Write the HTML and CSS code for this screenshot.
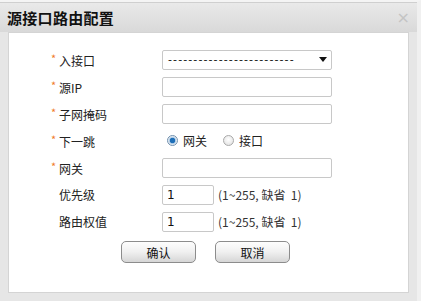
FILE: index.html
```html
<!DOCTYPE html>
<html lang="zh-CN">
<head>
  <meta charset="UTF-8">
  <title>源接口路由配置</title>
  <link rel="stylesheet" href="styles.css">
</head>
<body>

  <div class="dialog">
    <div class="dialog-header">
      <span class="dialog-title">源接口路由配置</span>
      <span class="dialog-close">&times;</span>
    </div>

    <div class="dialog-body">
      <div class="form-row">
        <label class="form-label"><span class="req">*</span>入接口</label>
        <div class="fake-select">
          <span>-------------------------</span>
          <span class="arrow"></span>
        </div>
      </div>

      <div class="form-row">
        <label class="form-label"><span class="req">*</span>源IP</label>
        <input type="text" class="text-input">
      </div>

      <div class="form-row">
        <label class="form-label"><span class="req">*</span>子网掩码</label>
        <input type="text" class="text-input">
      </div>

      <div class="form-row">
        <label class="form-label"><span class="req">*</span>下一跳</label>
        <div class="radio-group">
          <span class="radio checked"></span><span class="radio-text">网关</span>
          <span class="radio"></span><span class="radio-text">接口</span>
        </div>
      </div>

      <div class="form-row">
        <label class="form-label"><span class="req">*</span>网关</label>
        <input type="text" class="text-input">
      </div>

      <div class="form-row">
        <label class="form-label plain">优先级</label>
        <input type="text" class="text-input short" value="1">
        <span class="hint">(1~255, 缺省&nbsp;&nbsp;1)</span>
      </div>

      <div class="form-row">
        <label class="form-label plain">路由权值</label>
        <input type="text" class="text-input short" value="1">
        <span class="hint">(1~255, 缺省&nbsp;&nbsp;1)</span>
      </div>

      <div class="button-row">
        <button class="btn">确认</button>
        <button class="btn">取消</button>
      </div>
    </div>
  </div>

</body>
</html>
```

FILE: styles.css
```css
body {
  margin: 0;
  font-family: "Noto Sans CJK SC", "DejaVu Sans", sans-serif;
  font-size: 12px;
  color: #333;
  background: #fff;
}

.dialog {
  width: 421px;
  height: 301px;
  box-sizing: border-box;
  background: #e6e6e6;
  border-top: 2px solid #f4f4f4;
  border-right: 4px solid #f0f0f0;
}

.dialog-header {
  height: 30px;
  display: flex;
  align-items: center;
  justify-content: space-between;
  padding: 0 7px 0 7px;
  background: linear-gradient(#e9e9e9, #d9d9d9);
  border-top: 1px solid #cfcfcf;
  box-sizing: border-box;
}

.dialog-title {
  font-size: 15px;
  font-weight: bold;
  color: #111;
  letter-spacing: 0.3px;
}

.dialog-close {
  font-size: 16px;
  color: #c4c4c4;
  font-family: "DejaVu Sans", sans-serif;
}

.dialog-body {
  margin: 0 8px 0 8px;
  height: 261px;
  box-sizing: border-box;
  background: #fff;
  border: 1px solid #d4d4d4;
  padding: 13px 0 0 42px;
}

.form-row {
  display: flex;
  align-items: center;
  height: 27px;
}

.form-label {
  width: 111px;
  flex-shrink: 0;
  font-size: 12px;
  color: #222;
}

.form-label.plain {
  padding-left: 8px;
  width: 103px;
}

.req {
  color: #f07a2a;
  display: inline-block;
  width: 8px;
  vertical-align: 3px;
  font-size: 11px;
}

.text-input {
  width: 170px;
  height: 20px;
  box-sizing: border-box;
  border: 1px solid #c8c8c8;
  border-radius: 2px;
  padding: 0 4px;
  font-family: "DejaVu Sans", sans-serif;
  font-size: 12px;
  color: #111;
}

.text-input.short {
  width: 52px;
}

.hint {
  margin-left: 4px;
  font-size: 12px;
  color: #333;
}

.fake-select {
  width: 170px;
  height: 20px;
  box-sizing: border-box;
  border: 1px solid #c8c8c8;
  border-radius: 2px;
  display: flex;
  align-items: center;
  justify-content: space-between;
  padding: 0 4px 0 5px;
  font-family: "DejaVu Sans", sans-serif;
  font-size: 11px;
  color: #111;
  letter-spacing: 1.1px;
}

.arrow {
  width: 0;
  height: 0;
  border-left: 4px solid transparent;
  border-right: 4px solid transparent;
  border-top: 5px solid #111;
}

.radio-group {
  display: flex;
  align-items: center;
  padding-left: 5px;
}

.radio {
  width: 11px;
  height: 11px;
  box-sizing: border-box;
  border-radius: 50%;
  border: 1px solid #a9a9a9;
  background: radial-gradient(circle at 50% 40%, #fff, #ddd);
  margin-right: 5px;
}

.radio.checked {
  background: radial-gradient(circle, #1e6fb8 0 2.5px, #a8c8e6 3px, #f4f4f4 4.5px);
  border-color: #6f8fae;
}

.radio-text {
  margin-right: 16px;
  color: #222;
}

.button-row {
  display: flex;
  gap: 19px;
  padding: 6px 0 0 70px;
}

.btn {
  width: 75px;
  height: 22px;
  border: 1px solid #8c8c8c;
  border-radius: 5px;
  background: linear-gradient(#fdfdfd, #f0f0f0 50%, #d6d6d6);
  font-family: "Noto Sans CJK SC", sans-serif;
  font-size: 12px;
  color: #111;
  padding: 0;
}
```
